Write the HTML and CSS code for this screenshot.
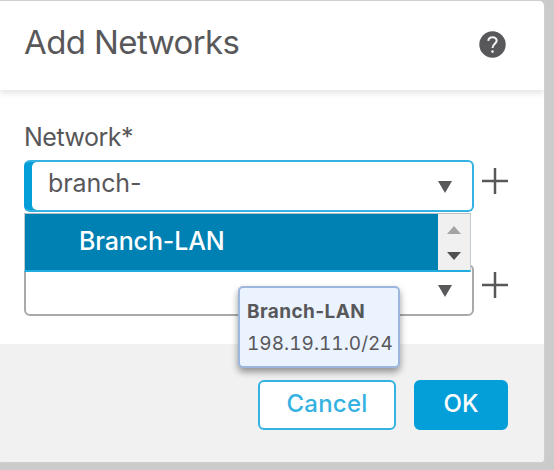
FILE: index.html
```html
<!DOCTYPE html>
<html lang="en">
<head>
<meta charset="utf-8">
<title>Add Networks</title>
<link rel="stylesheet" href="styles.css">
</head>
<body>
<main class="dialog">
  <header class="header">
    <h1 class="title"><span>Add Networks</span></h1>
    <svg class="help" viewBox="0 0 27 27"><circle cx="13.5" cy="13.5" r="13.2" fill="#58585b"/><path d="M9.3 9.9C9.5 5.2 17.7 5.2 17.7 9.6C17.7 12.6 13.5 13 13.5 17" fill="none" stroke="#f4f4f4" stroke-width="2"/><circle cx="13.5" cy="20.6" r="1.3" fill="#f4f4f4"/></svg>
  </header>
  <section class="body">
    <label class="label"><span>Network*</span></label>
    <div class="row">
      <div class="select active"><span class="value">branch-</span><i class="caret"></i></div>
      <svg class="plus" viewBox="0 0 26 26"><path d="M0 13H26M13 0V26"/></svg>
      <div class="menu">
        <div class="option"><span>Branch-LAN</span></div>
        <div class="scroll"><i class="up"></i><i class="down"></i></div>
      </div>
    </div>
    <div class="row second">
      <div class="select"><i class="caret"></i></div>
      <svg class="plus" viewBox="0 0 26 26"><path d="M0 13H26M13 0V26"/></svg>
      <div class="tooltip"><strong>Branch-LAN</strong><span class="address">198.19.11.0/24</span></div>
    </div>
  </section>
  <footer class="footer">
    <button class="button cancel"><span>Cancel</span></button>
    <button class="button ok"><span>OK</span></button>
  </footer>
</main>
</body>
</html>
```
FILE: styles.css
```css
* { box-sizing: border-box; }
body { margin: 0; height: 470px; padding-top: 1px; overflow: hidden; background: #cbcbcb; font-family: Inter, "Liberation Sans", sans-serif; color: #58585b; }
.dialog { width: 544px; height: 461px; display: flex; flex-direction: column; background: #fff; border-radius: 0 5px 4px 0; overflow: hidden; box-shadow: 0 0 2px #ddd; }
.header { height: 89px; flex: none; display: flex; align-items: flex-start; justify-content: space-between; padding: 21px 38px 0 24px; box-shadow: 0 3px 6px rgba(0,0,0,.11); }
.title { margin: 0; font-size: 33px; line-height: 40px; font-weight: 400; letter-spacing: -.6px; }
.help { width: 27px; height: 27px; margin-top: 9px; }
.body { height: 254px; flex: none; padding: 32px 0 0 24px; }
.label { display: block; height: 38px; font-size: 25px; line-height: 31px; font-weight: 400; letter-spacing: -.5px; }
.row { position: relative; display: flex; align-items: flex-start; gap: 8px; }
.second { margin-top: 52px; }
.select { width: 450px; height: 52px; flex: none; display: flex; align-items: flex-start; justify-content: space-between; border: 2px solid #a9a9a9; border-radius: 6px; padding: 0 20px 0 22px; background: #fff; }
.second .select { justify-content: flex-end; }
.active { border-color: #35b2e1; background: linear-gradient(90deg, #049fd9 12px, #fff 12px); padding-left: 0; border-left-color: #049fd9; }
.active .value { margin-left: 6px; padding-left: 16px; height: 48px; flex: 1; border-radius: 5px 0 0 5px; background: #fff; font-size: 25px; line-height: 42px; font-weight: 400; letter-spacing: -.1px; }
.caret { width: 0; height: 0; margin-top: 19px; border: 7px solid transparent; border-top: 12px solid #58585b; border-bottom: 0; }
.plus { width: 26px; height: 26px; margin-top: 8px; fill: none; stroke: #58585b; stroke-width: 2.5; }
.menu { position: absolute; z-index: 1; left: 0; top: 53px; width: 447px; height: 59px; display: flex; border: 1px solid #c4cbd0; border-top: 1px solid #b8bec2; border-bottom: 2px solid #20acdf; background: #f0f0f0; }
.option { width: 413px; flex: none; padding-left: 54px; background: #0081b4; color: #fff; font-size: 25px; line-height: 55px; font-weight: 500; letter-spacing: -.15px; }
.scroll { flex: 1; display: flex; flex-direction: column; align-items: center; padding-top: 12px; gap: 18px; }
.up, .down { width: 0; height: 0; border: 7px solid transparent; }
.up { border-top: 0; border-bottom: 8px solid #a3a3a3; }
.down { border-bottom: 0; border-top: 8px solid #505050; }
.tooltip { position: absolute; z-index: 2; left: 214px; top: 22px; width: 162px; height: 82px; padding: 9px 7px; display: flex; flex-direction: column; border: 2px solid #9db6dc; border-radius: 5px; background: #ebf3ff; box-shadow: 0 4px 7px rgba(0,0,0,.4); font-size: 19px; line-height: 33px; white-space: nowrap; }
.tooltip strong { font-weight: 700; line-height: 30px; letter-spacing: .4px; }
.address { font-variant-numeric: tabular-nums; letter-spacing: .03px; }
.footer { flex: 1; display: flex; justify-content: flex-end; gap: 18px; padding: 36px 36px 0 0; background: #f1f1f1; }
.button { width: 138px; height: 50px; padding: 0 0 3px; border: 2px solid #35b2e1; border-radius: 6px; background: #fff; color: #35b2e1; font: 500 24px/30px Inter, "Liberation Sans", sans-serif; }
.cancel { letter-spacing: .2px; }
.ok { width: 94px; border-color: #049fd9; background: #049fd9; color: #fff; }
```
